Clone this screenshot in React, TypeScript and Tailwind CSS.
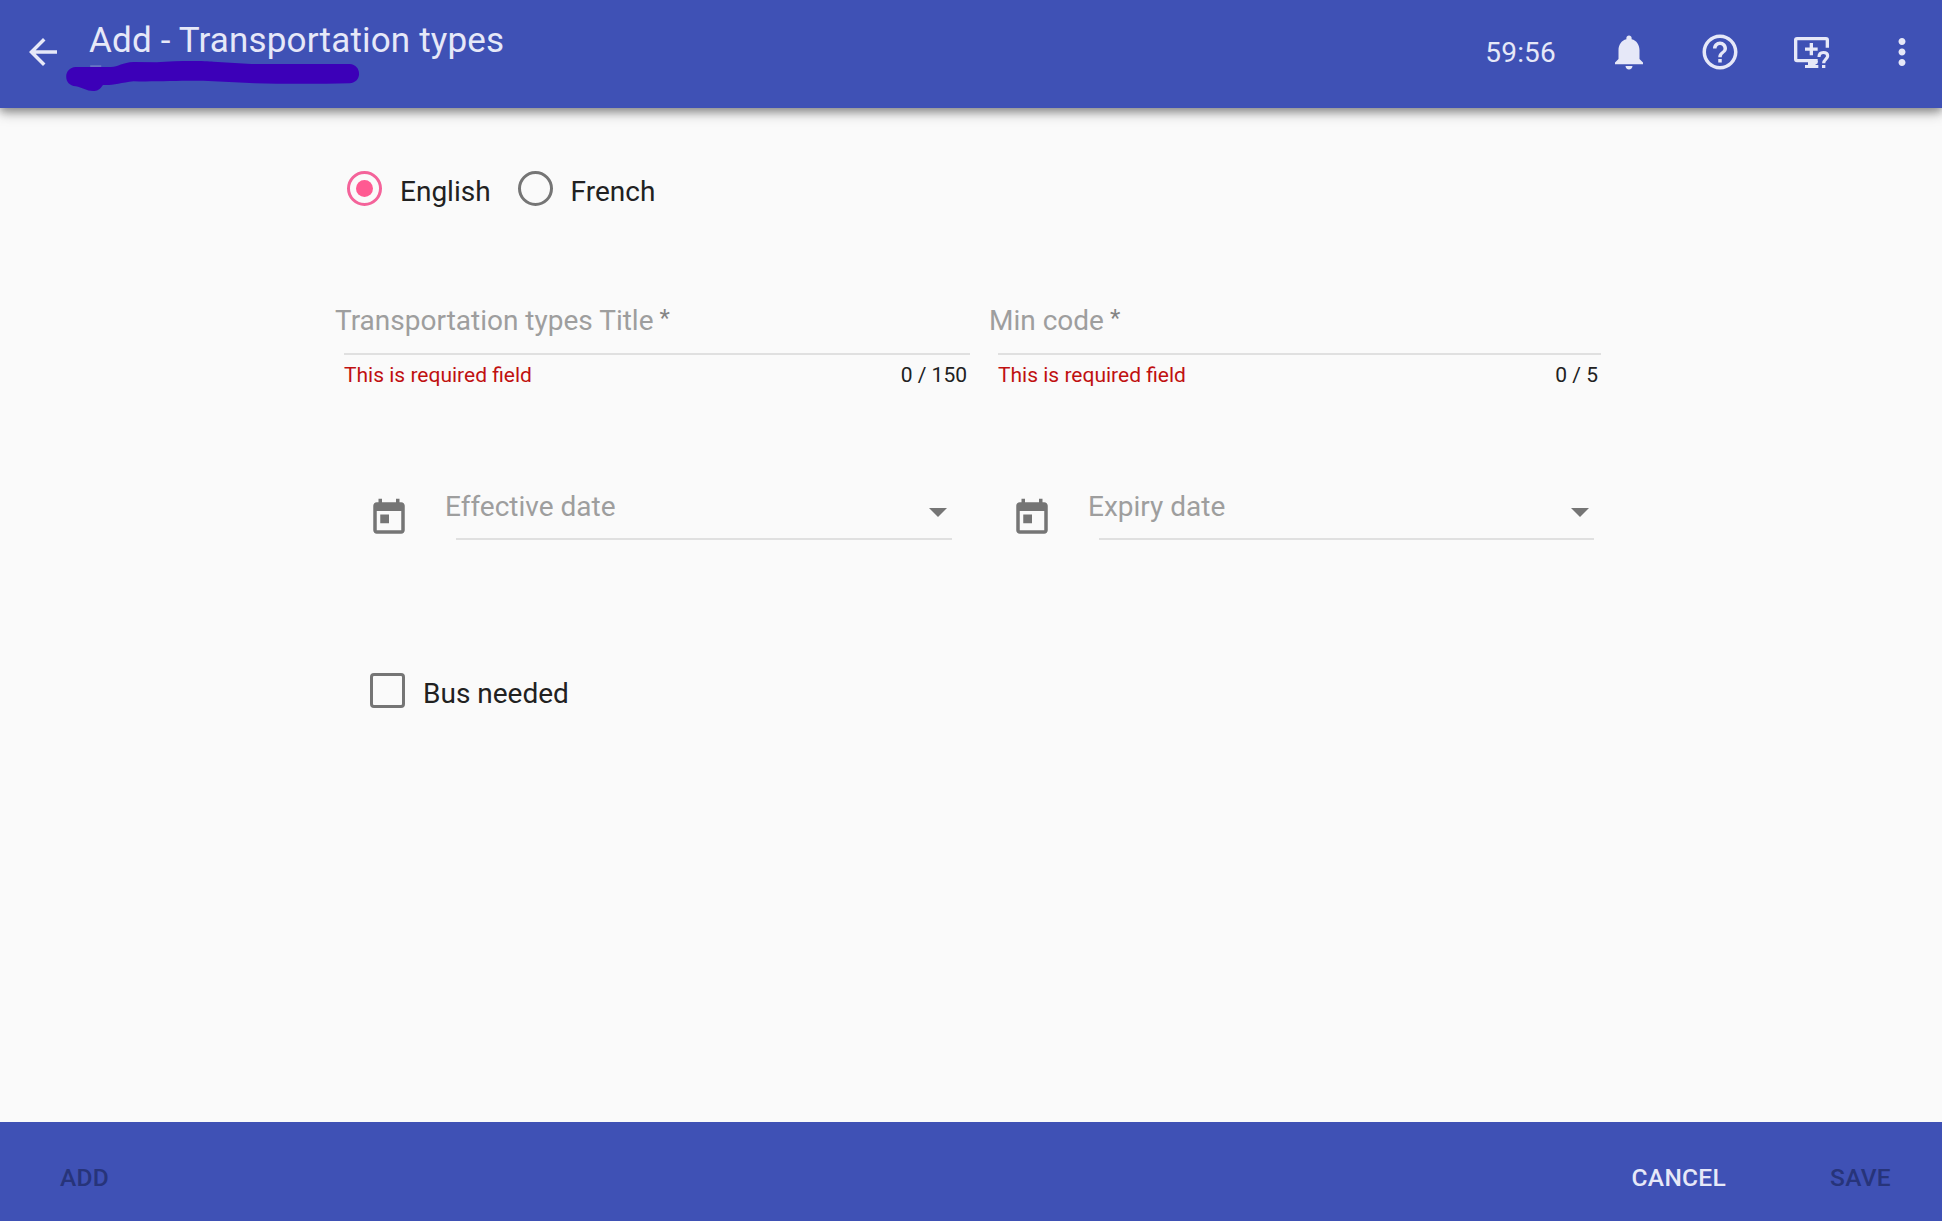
import type { ReactNode } from "react";

function Icon({ children }: { children: ReactNode }) {
  return (
    <svg viewBox="0 0 24 24" fill="currentColor" className="block h-[42px] w-[42px] shrink-0">
      {children}
    </svg>
  );
}

function QueueHelpIcon() {
  return (
    <svg viewBox="993 93 126 126" fill="none" stroke="currentColor" className="block h-[42px] w-[42px] shrink-0">
      <path d="M1102 143V120Q1102 116 1098 116H1011Q1007 116 1007 120V178Q1007 182 1011 182H1073" strokeWidth="10" />
      <path d="M1035 147.500H1073M1054 129V166" strokeWidth="10" />
      <path d="M1044 182H1073V190L1065 195H1075V204H1035V195H1044Z" fill="currentColor" stroke="none" />
      <path d="M1077 171C1077 162 1082 157.500 1090 157.500S1103 162 1103 168C1103 177 1091 178 1091 190" strokeWidth="9.500" />
      <path d="M1086 195H1096V204H1086Z" fill="currentColor" stroke="none" />
    </svg>
  );
}

function Header() {
  return (
    <header className="relative z-10 flex h-[108px] shrink-0 items-start bg-[#3f51b5] text-[#e6e8f8] shadow-[0_3px_8px_rgba(0,0,0,0.28),0_5px_12px_rgba(0,0,0,0.28)]">
      <button className="mt-[31px] ml-[22px]" aria-label="Back">
        <Icon>
          <path d="M20 11H7.830l5.590-5.590L12 4l-8 8 8 8 1.410-1.410L7.830 13H20v-2z" />
        </Icon>
      </button>
      <div className="relative ml-[25px] pt-[21px]">
        <h1 className="text-[35px] leading-10 tracking-[0.17px] whitespace-nowrap">Add - Transportation types</h1>
        <svg
          viewBox="180 175 880 110"
          preserveAspectRatio="none"
          className="absolute top-[58px] -left-[27px] h-[37px] w-[303px]"
          aria-hidden="true"
        >
          <path
            d="M220 202H322C344 201 355 188 388 187L455 188C510 183 590 183 620 186L730 193H1015C1052 195 1052 248 1015 250C930 252 820 252 740 250L590 243C520 242 440 246 388 244C350 249 325 257 299 255C290 269 282 273 270 273C252 273 238 263 220 259C183 257 183 204 220 202Z"
            fill="#3c00b8"
          />
          <path d="M262 199H294" stroke="#a9aede" strokeWidth="2" />
        </svg>
      </div>
      <div className="mt-[31px] mr-[19px] ml-auto flex items-center">
        <span className="relative top-px mr-[52px] text-[28px] leading-[42px] tracking-[0.2px]">59:56</span>
        <Icon>
          <path d="M12 22c1.100 0 2-.9 2-2h-4c0 1.100.9 2 2 2zm6-6v-5c0-3.070-1.630-5.640-4.500-6.320V4c0-.83-.67-1.500-1.500-1.500s-1.500.67-1.500 1.500v.68C7.640 5.360 6 7.920 6 11v5l-2 2v1h16v-1l-2-2z" />
        </Icon>
        <span className="w-[49px]" />
        <Icon>
          <path d="M11 18h2v-2h-2v2zm1-16C6.480 2 2 6.480 2 12s4.480 10 10 10 10-4.480 10-10S17.520 2 12 2zm0 18c-4.410 0-8-3.590-8-8s3.590-8 8-8 8 3.590 8 8-3.590 8-8 8zm0-14c-2.210 0-4 1.790-4 4h2c0-1.100.9-2 2-2s2 .9 2 2c0 2-3 1.750-3 5h2c0-2.250 3-2.500 3-5 0-2.210-1.790-4-4-4z" />
        </Icon>
        <span className="w-[50px]" />
        <QueueHelpIcon />
        <span className="w-12" />
        <Icon>
          <path d="M12 8c1.100 0 2-.9 2-2s-.9-2-2-2-2 .9-2 2 .9 2 2 2zm0 2c-1.100 0-2 .9-2 2s.9 2 2 2 2-.9 2-2-.9-2-2-2zm0 6c-1.100 0-2 .9-2 2s.9 2 2 2 2-.9 2-2-.9-2-2-2z" />
        </Icon>
      </div>
    </header>
  );
}

function Radio({ label, checked = false }: { label: string; checked?: boolean }) {
  return (
    <label className="flex h-10">
      <span
        className={
          checked
            ? "flex h-[35px] w-[35px] items-center justify-center rounded-full border-3 border-[#f4639a]"
            : "h-[35px] w-[35px] rounded-full border-3 border-[#757575]"
        }
      >
        {checked && <span className="h-[17px] w-[17px] rounded-full bg-[#ff5a92]" />}
      </span>
      <span className="ml-[18px] pt-px text-[28px] leading-10">{label}</span>
    </label>
  );
}

function TextField({ label, count, className }: { label: string; count: string; className: string }) {
  return (
    <div className={className}>
      <div className="-ml-[9px] flex h-[53px] pt-px text-[28px] leading-10 text-[#9e9e9e]">
        {label}
        <span className="-mt-[2px] ml-[6px] text-[24px] leading-[38px] text-[#858585]">*</span>
      </div>
      <div className="flex justify-between border-t-2 border-[#e0e0e0] pt-[5px] pr-[3px] text-[21px] leading-[30px]">
        <span className="text-[#c01010]">This is required field</span>
        <span>{count}</span>
      </div>
    </div>
  );
}

function DateField({ label, className }: { label: string; className: string }) {
  return (
    <div className={className}>
      <div className="mt-[11px] text-[#757575]">
        <Icon>
          <path d="M19 3h-1V1h-2v2H8V1H6v2H5c-1.110 0-1.990.9-1.990 2L3 19c0 1.100.89 2 2 2h14c1.100 0 2-.9 2-2V5c0-1.100-.9-2-2-2zm0 16H5V8h14v11zM7 10h5v5H7z" />
        </Icon>
      </div>
      <div className="ml-[46px] flex h-[54px] flex-1 border-b-2 border-[#e0e0e0]">
        <span className="-ml-[11px] pt-px text-[28px] leading-10 text-[#9e9e9e]">{label}</span>
        <svg viewBox="0 0 18 9" className="mt-[22px] mr-[5px] ml-auto h-[9px] w-[18px]" fill="#757575">
          <path d="M0 0H18L9 9Z" />
        </svg>
      </div>
    </div>
  );
}

export default function App() {
  return (
    <div className="flex h-[1221px] w-[1942px] flex-col overflow-hidden bg-[#fafafa] font-['Roboto',sans-serif] text-[#212121]">
      <Header />
      <main className="flex-1">
        <div className="mt-[63px] ml-[347px] flex gap-[27px]">
          <Radio label="English" checked />
          <Radio label="French" />
        </div>
        <div className="mt-[89px] ml-[344px] flex gap-7">
          <TextField label="Transportation types Title" count="0 / 150" className="w-[626px]" />
          <TextField label="Min code" count="0 / 5" className="w-[603px]" />
        </div>
        <div className="mt-[96px] ml-[368px] flex gap-[59px]">
          <DateField label="Effective date" className="flex w-[584px]" />
          <DateField label="Expiry date" className="flex w-[583px]" />
        </div>
        <label className="mt-[133px] ml-[370px] flex">
          <span className="h-[35px] w-[35px] rounded-[4px] border-3 border-[#757575]" />
          <span className="ml-[18px] pt-px text-[28px] leading-10">Bus needed</span>
        </label>
      </main>
      <footer className="flex h-[99px] shrink-0 bg-[#3f51b5] pt-[36px] text-[24.5px] leading-10 font-medium tracking-[0.3px] text-[#27347a]">
        <button className="ml-[60px] h-10">ADD</button>
        <button className="ml-auto h-10 text-[#e6e8f8]">CANCEL</button>
        <button className="mr-[51px] ml-[104px] h-10">SAVE</button>
      </footer>
    </div>
  );
}
